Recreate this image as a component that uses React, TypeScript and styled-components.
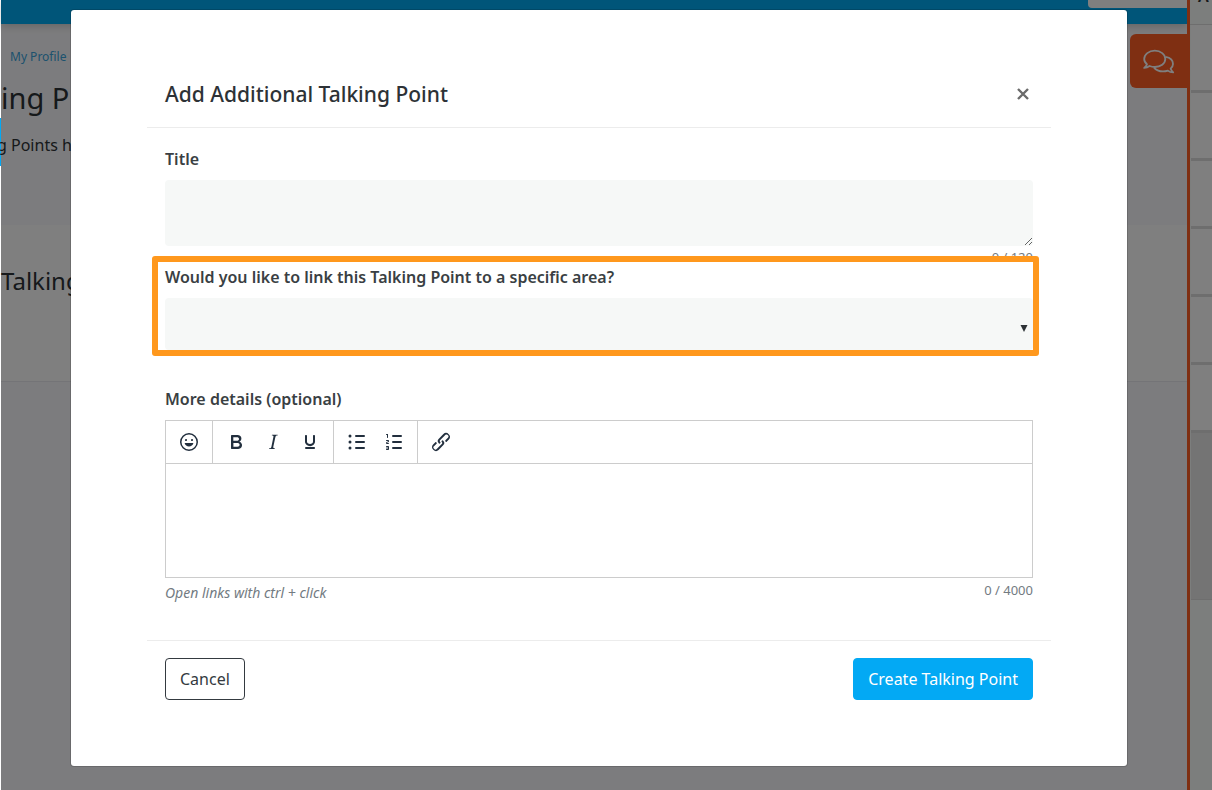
import React from "react";
import styled, { createGlobalStyle } from "styled-components";

const GlobalStyle = createGlobalStyle`
  *, *::before, *::after { box-sizing: border-box; }
  body {
    margin: 0;
    font-family: "Noto Sans", "Open Sans", sans-serif;
    font-size: 16px;
    line-height: 24px;
    color: #2d3236;
    background: #fff;
  }
  button, textarea, select { font: inherit; color: inherit; }
`;

const Shell = styled.div`
  display: flex;
  min-height: 100vh;
`;

const Edge = styled.div`
  width: 1px;
  padding-top: 118px;
`;

const EdgeMark = styled.div`
  height: 48px;
  background: #03a9f4;
`;

const Stage = styled.div`
  position: relative;
  display: flex;
  flex: 1;
  min-width: 0;
  background: #f9f9fc;
`;

const Page = styled.div`
  flex: 1;
  min-width: 0;
`;

const TopBar = styled.header`
  display: flex;
  justify-content: flex-end;
  height: 24px;
  background: #00aaf2;
  box-shadow: 0 2px 8px rgba(0, 0, 0, 0.2);
`;

const SearchField = styled.div`
  width: 99px;
  height: 8px;
  background: #fff;
  border-radius: 0 0 0 4px;
`;

const PageHead = styled.div`
  display: flex;
  justify-content: space-between;
  height: 201px;
`;

const Intro = styled.div`
  padding-top: 21px;
  white-space: nowrap;
`;

const Crumb = styled.a`
  display: block;
  padding-left: 9px;
  font-size: 12px;
  color: #3aa4dc;
  text-decoration: none;
`;

const PageTitle = styled.h1`
  margin: 9px 0 15px;
  font-size: 29px;
  line-height: 40px;
  font-weight: 400;
`;

const Lead = styled.p`
  margin: 0 0 0 -4px;
  font-size: 16px;
`;

const ChatButton = styled.button`
  display: flex;
  align-items: center;
  justify-content: center;
  width: 57px;
  height: 54px;
  margin-top: 10px;
  padding: 0;
  border: 0;
  border-radius: 6px 0 0 6px;
  background: #ff5e24;
  color: #fff;
`;

const Card = styled.section`
  height: 157px;
  padding-top: 38px;
  background: #fff;
  border-bottom: 1px solid #e9e9ee;
`;

const CardTitle = styled.h2`
  margin: 0;
  font-size: 24px;
  line-height: 36px;
  font-weight: 400;
`;

const SidePanel = styled.aside`
  width: 25px;
  overflow: hidden;
  border-left: 3px solid #ff5e24;
  background: #f8fcfa;
`;

const PanelHead = styled.div`
  height: 29px;
  margin-top: -4px;
  padding-left: 8px;
  border-bottom: 1px solid #dcdcdc;
  font-weight: 600;
  line-height: 0;
`;

const PanelRow = styled.div`
  height: 68px;
  margin-left: 1px;
  background: #fff;
  border-bottom: 3px solid #dcdcdc;
`;

const PanelBlock = styled.div`
  height: 167px;
  margin-left: 1px;
  background: #e8e8e8;
  border-bottom: 1px solid #dcdcdc;
`;

const Backdrop = styled.div`
  position: absolute;
  inset: 0;
  padding: 9px 84px 23px 69px;
  background: rgba(0, 0, 0, 0.5);
`;

const Dialog = styled.div`
  padding: 50px 76px 66px;
  background: #fff;
  background-clip: padding-box;
  border: 1px solid rgba(0, 0, 0, 0.15);
  border-radius: 4px;
`;

const DialogHead = styled.div`
  display: flex;
  align-items: center;
  justify-content: space-between;
  height: 68px;
  padding: 0 18px;
  border-bottom: 1px solid #ececec;
`;

const DialogTitle = styled.h2`
  margin: 0;
  font-size: 21px;
  font-weight: 500;
  line-height: 28px;
`;

const CloseButton = styled.button`
  display: flex;
  padding: 4px;
  border: 0;
  background: none;
  color: #6b6b6b;
`;

const DialogBody = styled.div`
  padding: 19px 18px 37px;
`;

const Label = styled.label`
  display: block;
  margin-bottom: 9px;
  font-size: 16px;
  font-weight: 600;
  line-height: 24px;
  color: #3a3f43;
`;

const TitleInput = styled.textarea`
  display: block;
  width: 100%;
  height: 66px;
  padding: 8px;
  border: 0;
  border-radius: 4px;
  background: #f6f8f7;
  resize: both;
`;

const Counter = styled.div`
  font-size: 13px;
  line-height: 23px;
  color: #737b82;
  text-align: right;
`;

const HighlightedField = styled.div`
  position: relative;
  margin: -4px 0 37px;

  &::after {
    content: "";
    position: absolute;
    inset: -9px -6px -6px -13px;
    border: 6px solid #ff981d;
    border-radius: 3px;
    pointer-events: none;
  }
`;

const AreaSelect = styled.select`
  display: block;
  width: 100%;
  height: 52px;
  padding: 0 24px 0 8px;
  border: 0;
  border-radius: 4px;
  background: #f6f8f7;
  appearance: none;
`;

const Caret = styled.svg`
  position: absolute;
  right: 5px;
  bottom: 18px;
  pointer-events: none;
`;

const Editor = styled.div`
  border: 1px solid #ccc;
`;

const Toolbar = styled.div`
  display: flex;
  height: 43px;
  border-bottom: 1px solid #ccc;
`;

const ToolGroup = styled.div`
  display: flex;
  align-items: center;
  gap: 3px;
  padding: 0 6px;
  border-right: 1px solid #ccc;

  &:last-child { border-right: 0; }
`;

const ToolButton = styled.button`
  display: flex;
  align-items: center;
  justify-content: center;
  width: 34px;
  height: 34px;
  padding: 0;
  border: 0;
  background: none;
  color: #222f3e;
`;

const EditorText = styled.textarea`
  display: block;
  width: 100%;
  height: 113px;
  padding: 8px;
  border: 0;
  resize: none;
  background: #fff;
`;

const EditorNotes = styled.div`
  display: flex;
  justify-content: space-between;
  align-items: flex-start;
  padding-top: 1px;
`;

const Hint = styled.em`
  padding-top: 4px;
  font-size: 14px;
  line-height: 20px;
  color: #737b82;
`;

const DialogFoot = styled.div`
  display: flex;
  justify-content: space-between;
  padding: 17px 18px 0;
  border-top: 1px solid #ececec;
`;

const Button = styled.button<{ $primary?: boolean }>`
  height: 42px;
  padding: 0 14px;
  border: 1px solid ${(p) => (p.$primary ? "#03a9f4" : "#343a40")};
  border-radius: 4px;
  background: ${(p) => (p.$primary ? "#03a9f4" : "#fff")};
  color: ${(p) => (p.$primary ? "#fff" : "#343a40")};
`;

const bars = (x: number) =>
  [5, 11, 17].map((y) => <rect key={y} x={x} y={y} width="10" height="2" rx="1" />);

const tools: { name: string; art: React.ReactNode }[][] = [
  [
    {
      name: "Emoticons",
      art: (
        <path d="M9 11c.6 0 1-.4 1-1s-.4-1-1-1a1 1 0 0 0-1 1c0 .6.4 1 1 1zm6 0c.6 0 1-.4 1-1s-.4-1-1-1a1 1 0 0 0-1 1c0 .6.4 1 1 1zm-3 5.5c2.1 0 4-1.5 4.4-3.5H7.6c.5 2 2.3 3.5 4.4 3.5zM12 3a9 9 0 1 0 0 18 9 9 0 0 0 0-18zm0 16.5a7.5 7.5 0 1 1 0-15 7.5 7.5 0 0 1 0 15z" />
      ),
    },
  ],
  [
    {
      name: "Bold",
      art: (
        <path d="M7.8 19c-.3 0-.5 0-.6-.2l-.2-.5V5.7c0-.2 0-.4.2-.5l.6-.2h5c1.5 0 2.7.3 3.5 1 .7.6 1.1 1.4 1.1 2.5a3 3 0 0 1-.6 1.9c-.4.6-1 1-1.6 1.2.4.1.9.3 1.3.6s.8.7 1 1.2c.4.4.5 1 .5 1.6 0 1.3-.4 2.3-1.3 3-.8.7-2.1 1-3.8 1H7.8zm5-8.3c.6 0 1.2-.1 1.6-.5.4-.3.6-.7.6-1.3 0-1.1-.8-1.7-2.3-1.7H9.3v3.5h3.4zm.5 6c.7 0 1.3-.1 1.7-.4.4-.4.6-.9.6-1.5s-.2-1-.7-1.4c-.4-.3-1-.4-2-.4H9.4v3.8h4z" />
      ),
    },
    {
      name: "Italic",
      art: (
        <path d="M16.7 4.7l-.1.9h-.3c-.6 0-1 0-1.4.3-.3.3-.4.6-.5 1.1l-2.1 9.8v.6c0 .5.4.8 1.4.8h.2l-.2.8H8l.2-.8h.2c1.1 0 1.8-.5 2-1.5l2-9.8.1-.5c0-.6-.4-.8-1.4-.8h-.3l.2-.9h5.8z" />
      ),
    },
    {
      name: "Underline",
      art: (
        <path d="M16 5c.6 0 1 .4 1 1v5.5a4 4 0 0 1-.4 1.8l-1 1.4a5.3 5.3 0 0 1-5.5 1 5 5 0 0 1-1.6-1c-.5-.4-.8-.9-1.1-1.4a4 4 0 0 1-.4-1.8V6c0-.6.4-1 1-1s1 .4 1 1v5.5c0 .3 0 .6.2 1l.6.7a3.3 3.3 0 0 0 2.2.8 3.4 3.4 0 0 0 2.2-.8c.3-.2.4-.5.6-.8l.2-.9V6c0-.6.4-1 1-1zM8 17h8c.6 0 1 .4 1 1s-.4 1-1 1H8a1 1 0 0 1 0-2z" />
      ),
    },
  ],
  [
    {
      name: "Bullet list",
      art: (
        <>
          {bars(10)}
          <circle cx="5" cy="6" r="1.5" />
          <circle cx="5" cy="12" r="1.5" />
          <circle cx="5" cy="18" r="1.5" />
        </>
      ),
    },
    {
      name: "Numbered list",
      art: (
        <>
          {bars(10)}
          <path d="M6 4v3.5c0 .3-.2.5-.5.5a.5.5 0 0 1-.5-.5V5h-.5a.5.5 0 0 1 0-1H6zm-1 8.8l.2.2h1.3c.3 0 .5.2.5.5s-.2.5-.5.5H4.9a1 1 0 0 1-.9-1V13c0-.4.3-.8.6-1l1.2-.4.2-.3a.2.2 0 0 0-.2-.2H4.5a.5.5 0 0 1-.5-.5c0-.3.2-.5.5-.5h1.6c.5 0 .9.4.9 1v.1c0 .4-.3.8-.6 1l-1.2.4-.2.3zM7 17v2c0 .6-.4 1-1 1H4.5a.5.5 0 0 1 0-1h1.2c.2 0 .3-.1.3-.3 0-.2-.1-.3-.3-.3H4.4a.4.4 0 1 1 0-.8h1.3c.2 0 .3-.1.3-.3 0-.2-.1-.3-.3-.3H4.5a.5.5 0 1 1 0-1H6c.6 0 1 .4 1 1z" />
        </>
      ),
    },
  ],
  [
    {
      name: "Insert link",
      art: (
        <path d="M6.2 12.3a1 1 0 0 1 1.4 1.4l-2.1 2a2 2 0 1 0 2.7 2.8l4.8-4.8a1 1 0 0 0 0-1.4 1 1 0 1 1 1.4-1.3 2.9 2.9 0 0 1 0 4L9.6 20a3.9 3.9 0 0 1-5.5-5.5l2-2zm11.6-.6a1 1 0 0 1-1.4-1.4l2-2a2 2 0 1 0-2.6-2.8L11 10.3a1 1 0 0 0 0 1.4A1 1 0 1 1 9.6 13a2.9 2.9 0 0 1 0-4L14.4 4a3.9 3.9 0 0 1 5.5 5.5l-2 2z" />
      ),
    },
  ],
];

export default function App() {
  return (
    <>
      <GlobalStyle />
      <Shell>
        <Edge>
          <EdgeMark />
        </Edge>
        <Stage>
          <Page>
            <TopBar>
              <SearchField />
            </TopBar>
            <PageHead>
              <Intro>
                <Crumb href="#profile">My Profile</Crumb>
                <PageTitle>ing P</PageTitle>
                <Lead>g Points h</Lead>
              </Intro>
              <ChatButton aria-label="Open conversations">
                <svg
                  width="32"
                  height="28"
                  viewBox="0 -2 32 28"
                  fill="none"
                  stroke="currentColor"
                  strokeWidth="1.8"
                  strokeLinejoin="round"
                >
                  <path d="M4 15.2C1.8 13.6 1.2 11.8 1.2 10 1.2 5.4 5.9 1.7 11.8 1.7S22.3 5.4 22.3 10 17.6 18 11.8 18C9.8 18 8 17.6 6.6 17 5 18.2 3 18.9 1.2 18.9 2.6 17.7 3.6 16.6 4 15.2z" />
                  <path d="M22.6 7.8C27.3 8.6 30 11.4 30 15c0 1.7-.8 3.3-2.4 4.6.4 1.4 1.4 2.7 2.6 3.8-2 0-4-.7-5.4-1.8-1.4.5-3 .8-4.8.8-3.8 0-7.2-1.5-9-3.8" />
                </svg>
              </ChatButton>
            </PageHead>
            <Card>
              <CardTitle>Talking</CardTitle>
            </Card>
          </Page>
          <SidePanel>
            <PanelHead>A</PanelHead>
            {[0, 1, 2, 3, 4, 5].map((row) => (
              <PanelRow key={row} />
            ))}
            <PanelBlock />
          </SidePanel>

          <Backdrop>
            <Dialog role="dialog" aria-modal="true" aria-labelledby="dialog-title">
              <DialogHead>
                <DialogTitle id="dialog-title">Add Additional Talking Point</DialogTitle>
                <CloseButton aria-label="Close">
                  <svg width="12" height="12" viewBox="0 0 12 12" stroke="currentColor" strokeWidth="2.4">
                    <path d="M1 1l10 10M11 1L1 11" />
                  </svg>
                </CloseButton>
              </DialogHead>

              <DialogBody>
                <Label htmlFor="title">Title</Label>
                <TitleInput id="title" />
                <Counter>0 / 120</Counter>

                <HighlightedField>
                  <Label htmlFor="area">
                    Would you like to link this Talking Point to a specific area?
                  </Label>
                  <AreaSelect id="area" defaultValue="">
                    <option value="" />
                  </AreaSelect>
                  <Caret width="8" height="7" viewBox="0 0 8 7" fill="#2d3236">
                    <path d="M0.5 0h7L4 7z" />
                  </Caret>
                </HighlightedField>

                <Label htmlFor="details">More details (optional)</Label>
                <Editor>
                  <Toolbar>
                    {tools.map((group) => (
                      <ToolGroup key={group[0].name}>
                        {group.map((tool) => (
                          <ToolButton key={tool.name} aria-label={tool.name}>
                            <svg width="24" height="24" viewBox="0 0 24 24" fill="currentColor" fillRule="evenodd">
                              {tool.art}
                            </svg>
                          </ToolButton>
                        ))}
                      </ToolGroup>
                    ))}
                  </Toolbar>
                  <EditorText id="details" />
                </Editor>
                <EditorNotes>
                  <Hint>Open links with ctrl + click</Hint>
                  <Counter>0 / 4000</Counter>
                </EditorNotes>
              </DialogBody>

              <DialogFoot>
                <Button>Cancel</Button>
                <Button $primary>Create Talking Point</Button>
              </DialogFoot>
            </Dialog>
          </Backdrop>
        </Stage>
      </Shell>
    </>
  );
}
